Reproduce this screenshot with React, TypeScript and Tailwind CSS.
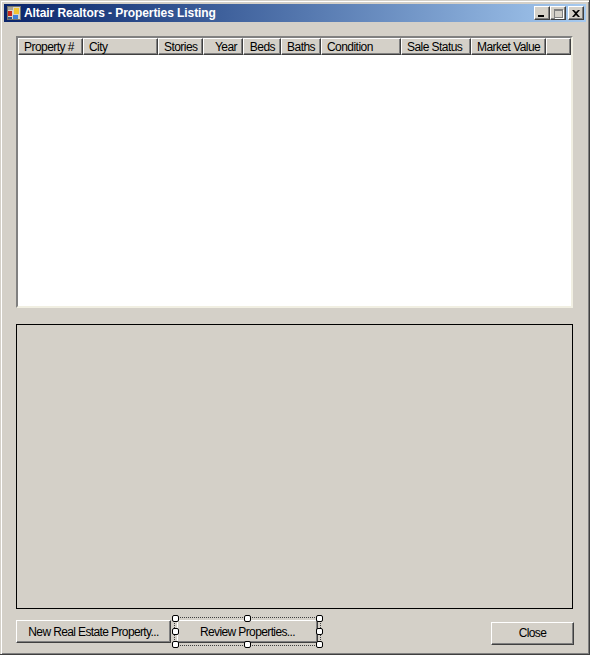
const COLUMNS = [
  { label: 'Property #', width: 'w-[65px]', align: 'text-left' },
  { label: 'City', width: 'w-[75px]', align: 'text-left' },
  { label: 'Stories', width: 'w-[45px]', align: 'text-right' },
  { label: 'Year', width: 'w-[40px]', align: 'text-right' },
  { label: 'Beds', width: 'w-[38px]', align: 'text-right' },
  { label: 'Baths', width: 'w-[40px]', align: 'text-right' },
  { label: 'Condition', width: 'w-[80px]', align: 'text-left' },
  { label: 'Sale Status', width: 'w-[70px]', align: 'text-left' },
  { label: 'Market Value', width: 'w-[75px]', align: 'text-left' },
];

const raised =
  'border-t border-l border-t-white border-l-white border-r border-b border-r-[#404040] border-b-[#404040] shadow-[inset_-1px_-1px_0_#808080]';

function HeaderCell({ label, width, align }: { label: string; width: string; align: string }) {
  return (
    <div className={`${width} h-[17px] shrink-0 bg-[#d4d0c8] ${raised} px-[5px] text-[12px] leading-[17px] text-black tracking-[-0.55px] whitespace-nowrap overflow-hidden ${align}`}>
      {label}
    </div>
  );
}

function Button({ label, width }: { label: string; width: string }) {
  return (
    <button className={`${width} h-[23px] bg-[#d4d0c8] ${raised} text-[12px] leading-[20px] text-black tracking-[-0.62px] whitespace-nowrap`}>
      {label}
    </button>
  );
}

function Handle({ pos }: { pos: string }) {
  return <span className={`absolute ${pos} w-[7px] h-[7px] bg-white border border-black rounded-[2px]`} />;
}

function CaptionButton({ children, className = '' }: { children: React.ReactNode; className?: string }) {
  return (
    <div className={`w-[16px] h-[14px] bg-[#d4d0c8] ${raised} flex items-center justify-center ${className}`}>
      {children}
    </div>
  );
}

function AppIcon() {
  return (
    <svg width="14" height="14" viewBox="0 0 14 14" className="shrink-0">
      <rect x="0.5" y="0.5" width="13" height="13" fill="#d8d4c8" stroke="#77756a" />
      <rect x="1" y="1" width="5" height="3" fill="#a8a498" />
      <rect x="7" y="2" width="5" height="6" fill="#f2c531" />
      <rect x="1" y="5" width="4" height="5" fill="#c8281c" />
      <rect x="6" y="9" width="5" height="4" fill="#3f7fd8" />
      <rect x="1" y="11" width="4" height="2" fill="#305890" />
    </svg>
  );
}

export default function App() {
  return (
    <div
      className="w-[590px] h-[655px] overflow-hidden bg-[#d4d0c8] border-r border-b border-r-[#404040] border-b-[#404040] shadow-[inset_1px_1px_0_#d4d0c8,inset_2px_2px_0_#ffffff,inset_-1px_-1px_0_#808080] pt-[4px] pl-[4px] pr-[3px] flex flex-col"
      style={{ fontFamily: '"Liberation Sans", Arial, sans-serif' }}
    >
      {/* Title bar */}
      <div className="h-[18px] shrink-0 flex items-center bg-gradient-to-r from-[#0a246a] to-[#a6caf0] pl-[3px] pr-[2px]">
        <AppIcon />
        <span className="ml-[3px] text-[12px] font-bold leading-none text-white tracking-[-0.08px] whitespace-nowrap">
          Altair Realtors - Properties Listing
        </span>
        <div className="ml-auto flex items-center">
          <CaptionButton>
            <span className="block w-[6px] h-[2px] bg-black mt-[6px] mr-[2px]" />
          </CaptionButton>
          <CaptionButton>
            <span className="block w-[9px] h-[9px] border border-[#808080] border-t-2 shadow-[1px_1px_0_#fff]" />
          </CaptionButton>
          <CaptionButton className="ml-[2px]">
            <svg width="8" height="7" viewBox="0 0 8 7">
              <path d="M0 0h2l2 2 2-2h2L5 3.5 8 7H6L4 5 2 7H0l3-3.5z" fill="#000" />
            </svg>
          </CaptionButton>
        </div>
      </div>

      <div className="flex-1 flex flex-col pl-[12px] pr-[13px] pt-[14px]">
        {/* List view */}
        <div className="h-[272px] w-[557px] shrink-0 bg-white border-2 border-t-[#808080] border-l-[#808080] border-r-[#f1efe2] border-b-[#f1efe2]">
          <div className="flex bg-[#d4d0c8]">
            {COLUMNS.map((column) => (
              <HeaderCell key={column.label} {...column} />
            ))}
            <div className={`flex-1 h-[17px] bg-[#d4d0c8] ${raised}`} />
          </div>
        </div>

        {/* Panel */}
        <div className="mt-[16px] h-[285px] w-[557px] shrink-0 border border-black" />

        {/* Buttons */}
        <div className="mt-[11px] flex items-start">
          <Button label="New Real Estate Property..." width="w-[155px]" />
          <div className="relative ml-[6px] flex">
            <Button label="Review Properties..." width="w-[141px]" />
            <div className="absolute -left-[3px] -top-[3px] -right-[3px] -bottom-[3px] border border-dotted border-[#404040]" />
            <Handle pos="-left-[5px] -top-[5px]" />
            <Handle pos="left-[67px] -top-[5px]" />
            <Handle pos="-right-[5px] -top-[5px]" />
            <Handle pos="-left-[5px] top-[8px]" />
            <Handle pos="-right-[5px] top-[8px]" />
            <Handle pos="-left-[5px] -bottom-[5px]" />
            <Handle pos="left-[67px] -bottom-[5px]" />
            <Handle pos="-right-[5px] -bottom-[5px]" />
          </div>
          <div className="ml-auto mr-[-1px]">
            <Button label="Close" width="w-[83px]" />
          </div>
        </div>
      </div>
    </div>
  );
}
